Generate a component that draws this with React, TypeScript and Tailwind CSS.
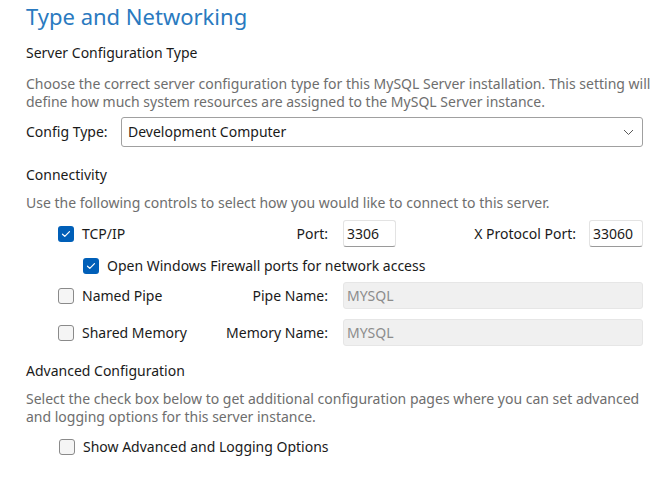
import React from "react";

function Check({ checked }: { checked?: boolean }) {
  if (checked) {
    return (
      <span className="flex h-[16px] w-[16px] shrink-0 items-center justify-center rounded-[3px] bg-[#005fb8]">
        <svg width="10" height="8" viewBox="0 0 10 8" fill="none">
          <path d="M1.5 4.2 L3.8 6.4 L8.5 1.6" stroke="#ffffff" strokeWidth="1.2" strokeLinecap="round" strokeLinejoin="round" />
        </svg>
      </span>
    );
  }
  return <span className="h-[16px] w-[16px] shrink-0 rounded-[3px] border border-[#8a8a8a] bg-[#f5f5f5]" />;
}

function TextBox({ value, className = "" }: { value: string; className?: string }) {
  return (
    <div
      className={`flex h-[27px] items-center rounded-[3px] border border-[#e3e3e3] border-b-[#9a9a9a] bg-white pl-[3px] text-[#1a1a1a] ${className}`}
    >
      {value}
    </div>
  );
}

function DisabledBox({ value }: { value: string }) {
  return (
    <div className="ml-[15px] flex h-[27px] flex-1 items-center rounded-[3px] border border-[#e6e6e6] bg-[#f0f0f0] pl-[3px] text-[#8c8c8c]">
      {value}
    </div>
  );
}

export default function App() {
  return (
    <div
      className="h-[481px] w-[660px] bg-white pl-[26px] pr-[17px] text-[14px] leading-[18px] text-[#1a1a1a]"
      style={{ fontFamily: '"Noto Sans", "Open Sans", sans-serif' }}
    >
      <h1 className="h-[32px] text-[22px] leading-[32px] text-[#2a7ac0]">Type and Networking</h1>

      <h2 className="mt-[12px]">Server Configuration Type</h2>
      <p className="mt-[13px] whitespace-nowrap text-[#6e6e6e]">
        Choose the correct server configuration type for this MySQL Server installation. This setting will
        <br />
        define how much system resources are assigned to the MySQL Server instance.
      </p>

      <div className="mt-[6px] flex items-center">
        <span className="w-[95px]">Config Type:</span>
        <div className="flex h-[30px] flex-1 items-center justify-between rounded-[3px] border border-[#a0a0a0] bg-white pl-[6px] pr-[8px]">
          <span>Development Computer</span>
          <svg width="11" height="7" viewBox="0 0 11 7" fill="none">
            <path d="M1 1 L5.5 5.5 L10 1" stroke="#5a5a5a" strokeWidth="1" />
          </svg>
        </div>
      </div>

      <h2 className="mt-[19px]">Connectivity</h2>
      <p className="mt-[10px] text-[#6e6e6e]">Use the following controls to select how you would like to connect to this server.</p>

      <div className="mt-[8px] flex h-[27px] items-center">
        <div className="flex w-[302px] items-center justify-between pl-[32px]">
          <span className="flex items-center gap-[8px]">
            <Check checked />
            TCP/IP
          </span>
          <span>Port:</span>
        </div>
        <TextBox value="3306" className="ml-[15px] w-[53px]" />
        <div className="flex flex-1 items-center justify-end">
          <span className="mr-[13px]">X Protocol Port:</span>
          <TextBox value="33060" className="w-[54px]" />
        </div>
      </div>

      <div className="mt-[10px] flex h-[18px] items-center gap-[8px] pl-[57px]">
        <Check checked />
        Open Windows Firewall ports for network access
      </div>

      <div className="mt-[7px] flex h-[27px] items-center">
        <div className="flex w-[302px] items-center justify-between pl-[32px]">
          <span className="flex items-center gap-[8px]">
            <Check />
            Named Pipe
          </span>
          <span>Pipe Name:</span>
        </div>
        <DisabledBox value="MYSQL" />
      </div>

      <div className="mt-[10px] flex h-[27px] items-center">
        <div className="flex w-[302px] items-center justify-between pl-[32px]">
          <span className="flex items-center gap-[8px]">
            <Check />
            Shared Memory
          </span>
          <span>Memory Name:</span>
        </div>
        <DisabledBox value="MYSQL" />
      </div>

      <h2 className="mt-[16px]">Advanced Configuration</h2>
      <p className="mt-[10px] whitespace-nowrap text-[#6e6e6e]">
        Select the check box below to get additional configuration pages where you can set advanced
        <br />
        and logging options for this server instance.
      </p>

      <div className="mt-[12px] flex h-[18px] items-center gap-[8px] pl-[33px]">
        <Check />
        Show Advanced and Logging Options
      </div>
    </div>
  );
}
